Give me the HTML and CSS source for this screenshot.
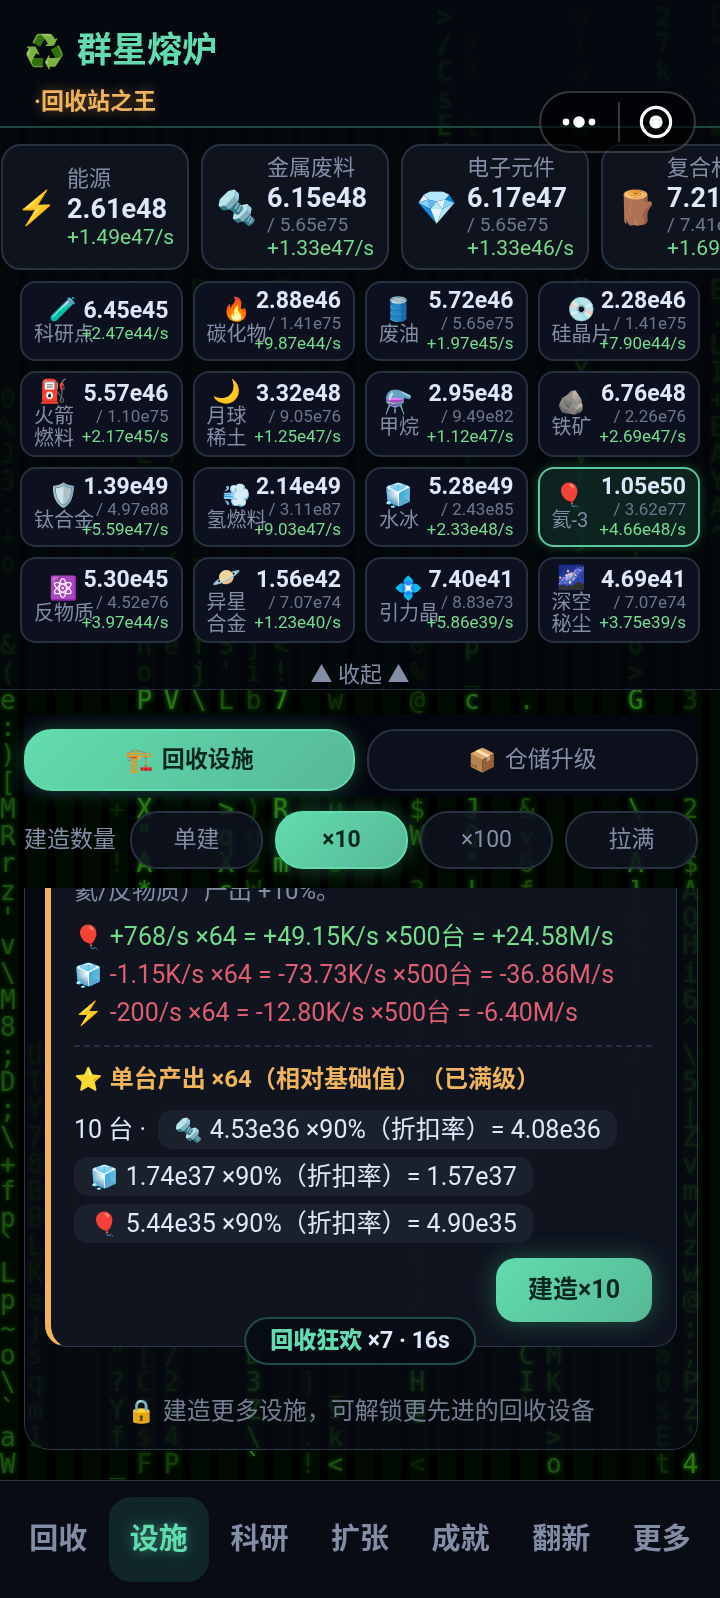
FILE: index.html
```html
<!DOCTYPE html>
<html lang="zh-CN">
<head>
<meta charset="utf-8">
<meta name="viewport" content="width=device-width, initial-scale=1">
<title>群星熔炉</title>
<link rel="stylesheet" href="styles.css">
</head>
<body>
<div class="rain" id="rain" aria-hidden="true"></div>

<div class="app">
  <header class="top">
    <h1 class="top-title"><span class="emoji">♻️</span>群星熔炉</h1>
    <p class="top-rank">·回收站之王</p>
  </header>

  <div class="capsule">
    <button class="capsule-btn" type="button" aria-label="更多操作">
      <svg width="36" height="16" viewBox="0 0 36 16"><circle cx="5" cy="8" r="3.4"/><circle cx="18" cy="8" r="5.8"/><circle cx="31" cy="8" r="3.4"/></svg>
    </button>
    <button class="capsule-btn capsule-close" type="button" aria-label="关闭">
      <svg width="34" height="34" viewBox="0 0 34 34"><circle cx="17" cy="17" r="14.6" fill="none" stroke="#fff" stroke-width="3.2"/><circle cx="17" cy="17" r="6.6"/></svg>
    </button>
  </div>

  <section class="resources" aria-label="资源">
    <div class="strip">
      <article class="main-res"><span class="emoji">⚡</span><div><h2>能源</h2><b>2.61e48</b><i class="rate">+1.49e47/s</i></div></article>
      <article class="main-res"><span class="emoji">🔩</span><div><h2>金属废料</h2><b>6.15e48</b><i class="cap">/ 5.65e75</i><i class="rate">+1.33e47/s</i></div></article>
      <article class="main-res"><span class="emoji">💎</span><div><h2>电子元件</h2><b>6.17e47</b><i class="cap">/ 5.65e75</i><i class="rate">+1.33e46/s</i></div></article>
      <article class="main-res"><span class="emoji">🪵</span><div><h2>复合材料</h2><b>7.21e47</b><i class="cap">/ 7.41e75</i><i class="rate">+1.69e46/s</i></div></article>
    </div>

    <div class="grid">
      <article class="res"><div class="res-name"><span class="emoji">🧪</span><span>科研点</span></div><div class="res-val"><b>6.45e45</b><i class="rate">+2.47e44/s</i></div></article>
      <article class="res"><div class="res-name"><span class="emoji">🔥</span><span>碳化物</span></div><div class="res-val"><b>2.88e46</b><i class="cap">/ 1.41e75</i><i class="rate">+9.87e44/s</i></div></article>
      <article class="res"><div class="res-name"><span class="emoji">🛢️</span><span>废油</span></div><div class="res-val"><b>5.72e46</b><i class="cap">/ 5.65e75</i><i class="rate">+1.97e45/s</i></div></article>
      <article class="res"><div class="res-name"><span class="emoji">💿</span><span>硅晶片</span></div><div class="res-val"><b>2.28e46</b><i class="cap">/ 1.41e75</i><i class="rate">+7.90e44/s</i></div></article>

      <article class="res"><div class="res-name"><span class="emoji">⛽</span><span>火箭<br>燃料</span></div><div class="res-val"><b>5.57e46</b><i class="cap">/ 1.10e75</i><i class="rate">+2.17e45/s</i></div></article>
      <article class="res"><div class="res-name"><span class="emoji">🌙</span><span>月球<br>稀土</span></div><div class="res-val"><b>3.32e48</b><i class="cap">/ 9.05e76</i><i class="rate">+1.25e47/s</i></div></article>
      <article class="res"><div class="res-name"><span class="emoji">⚗️</span><span>甲烷</span></div><div class="res-val"><b>2.95e48</b><i class="cap">/ 9.49e82</i><i class="rate">+1.12e47/s</i></div></article>
      <article class="res"><div class="res-name"><span class="emoji">🪨</span><span>铁矿</span></div><div class="res-val"><b>6.76e48</b><i class="cap">/ 2.26e76</i><i class="rate">+2.69e47/s</i></div></article>

      <article class="res"><div class="res-name"><span class="emoji">🛡️</span><span>钛合金</span></div><div class="res-val"><b>1.39e49</b><i class="cap">/ 4.97e88</i><i class="rate">+5.59e47/s</i></div></article>
      <article class="res"><div class="res-name"><span class="emoji">💨</span><span>氢燃料</span></div><div class="res-val"><b>2.14e49</b><i class="cap">/ 3.11e87</i><i class="rate">+9.03e47/s</i></div></article>
      <article class="res"><div class="res-name"><span class="emoji">🧊</span><span>水冰</span></div><div class="res-val"><b>5.28e49</b><i class="cap">/ 2.43e85</i><i class="rate">+2.33e48/s</i></div></article>
      <article class="res res-hot"><div class="res-name"><span class="emoji">🎈</span><span>氦-3</span></div><div class="res-val"><b>1.05e50</b><i class="cap">/ 3.62e77</i><i class="rate">+4.66e48/s</i></div></article>

      <article class="res"><div class="res-name"><span class="emoji">⚛️</span><span>反物质</span></div><div class="res-val"><b>5.30e45</b><i class="cap">/ 4.52e76</i><i class="rate">+3.97e44/s</i></div></article>
      <article class="res"><div class="res-name"><span class="emoji">🪐</span><span>异星<br>合金</span></div><div class="res-val"><b>1.56e42</b><i class="cap">/ 7.07e74</i><i class="rate">+1.23e40/s</i></div></article>
      <article class="res"><div class="res-name"><span class="emoji">💠</span><span>引力晶</span></div><div class="res-val"><b>7.40e41</b><i class="cap">/ 8.83e73</i><i class="rate">+5.86e39/s</i></div></article>
      <article class="res"><div class="res-name"><span class="emoji">🌌</span><span>深空<br>秘尘</span></div><div class="res-val"><b>4.69e41</b><i class="cap">/ 7.07e74</i><i class="rate">+3.75e39/s</i></div></article>
    </div>
    <button class="collapse" type="button">▲ 收起 ▲</button>
  </section>

  <main class="stage">
    <div class="tabs">
      <button class="pill pill-on" type="button"><span class="emoji">🏗️</span>回收设施</button>
      <button class="pill" type="button"><span class="emoji">📦</span>仓储升级</button>
    </div>
    <div class="amount">
      <span class="amount-label">建造数量</span>
      <button class="pill" type="button">单建</button>
      <button class="pill pill-on" type="button">×10</button>
      <button class="pill" type="button">×100</button>
      <button class="pill" type="button">拉满</button>
    </div>

    <div class="viewport">
      <section class="panel">
        <article class="facility">
          <p class="desc">氦/反物质）产出 +10%。</p>
          <ul class="flows">
            <li class="gain"><span class="emoji">🎈</span>+768/s ×64 = +49.15K/s ×500台 = +24.58M/s</li>
            <li class="loss"><span class="emoji">🧊</span>-1.15K/s ×64 = -73.73K/s ×500台 = -36.86M/s</li>
            <li class="loss"><span class="emoji">⚡</span>-200/s ×64 = -12.80K/s ×500台 = -6.40M/s</li>
          </ul>
          <p class="star"><span class="emoji">⭐</span>单台产出 ×64（相对基础值）（已满级）</p>
          <div class="costs">
            <span>10 台 ·</span>
            <span class="chip"><span class="emoji">🔩</span>4.53e36 ×90%（折扣率）= 4.08e36</span>
            <span class="chip"><span class="emoji">🧊</span>1.74e37 ×90%（折扣率）= 1.57e37</span>
            <span class="chip"><span class="emoji">🎈</span>5.44e35 ×90%（折扣率）= 4.90e35</span>
          </div>
          <button class="build" type="button">建造×10</button>
        </article>
        <p class="locked"><span class="emoji">🔒</span>建造更多设施，可解锁更先进的回收设备</p>
      </section>
    </div>
  </main>

  <nav class="nav">
    <a href="#recycle">回收</a>
    <a href="#facility" class="nav-on" aria-current="page">设施</a>
    <a href="#research">科研</a>
    <a href="#expand">扩张</a>
    <a href="#achievement">成就</a>
    <a href="#renew">翻新</a>
    <a href="#more">更多</a>
  </nav>
</div>

<div class="toast" role="status"><strong>回收狂欢</strong> ×7 · 16s</div>
<script src="rain.js"></script>
</body>
</html>
```
FILE: styles.css
```css
:root {
  --mint: #62dcae;
  --mint-deep: #56b896;
  --muted: #838da6;
  --text: #dfe8fa;
  --green: #74dc8c;
  --red: #df5f72;
  --gold: #f0b45c;
  --line: #26323f;
}

* { box-sizing: border-box; }

body {
  margin: 0;
  background: #000;
  color: var(--text);
  font-family: Roboto, "Noto Sans CJK SC", "Noto Color Emoji", sans-serif;
  font-size: 24px;
  text-spacing-trim: space-all;
}

h1, h2, p, ul { margin: 0; padding: 0; }
ul { list-style: none; }
i { font-style: normal; }
button { font: inherit; color: inherit; border: 0; background: none; padding: 0; cursor: pointer; }
.emoji { font-family: "Noto Color Emoji", sans-serif; font-size: 23px; font-weight: 400; line-height: 1; }

/* falling characters */
.rain {
  position: fixed;
  inset: 4px -17px -17px 0;
  z-index: 0;
  display: grid;
  grid-template-columns: repeat(27, minmax(0, 1fr));
  grid-template-rows: repeat(59, minmax(0, 1fr));
  font: 26px/27px "DejaVu Sans Mono", monospace;
  color: #2d8414;
  text-shadow: 0 0 4px #2d8414;
}
.rain-band { grid-row: 1 / -1; margin-right: 8px; background: #010a01; }

.app { position: relative; z-index: 1; min-height: 100vh; display: flex; flex-direction: column; }

.top {
  padding: 25px 24px 0;
  height: 128px;
  border-bottom: 2px solid #1c473f;
  background: rgba(5, 9, 17, .88);
}
.top-title {
  display: flex;
  align-items: center;
  gap: 12px;
  font-size: 35px;
  line-height: 52px;
  font-weight: 700;
  color: var(--mint);
}
.top-title .emoji { font-size: 33px; }
.top-rank {
  padding-left: 10px;
  font-size: 23px;
  line-height: 50px;
  font-weight: 700;
  color: var(--gold);
  text-shadow: 0 0 12px rgba(240, 160, 60, .5);
}

.capsule {
  position: absolute;
  top: 91px;
  right: 24px;
  z-index: 2;
  display: flex;
  width: 157px;
  height: 62px;
  border: 2px solid rgba(255, 255, 255, .2);
  border-radius: 31px;
  background: rgba(0, 0, 0, .6);
}
.capsule-btn { flex: 1; display: grid; place-items: center; position: relative; }
.capsule-btn svg { fill: #fff; }
.capsule-close::before {
  content: "";
  position: absolute;
  left: 0;
  top: 9px;
  bottom: 9px;
  width: 2px;
  background: rgba(255, 255, 255, .2);
}

.resources {
  border-bottom: 1px solid #1e2a3a;
  background: rgba(4, 7, 14, .7);
}
.strip { display: flex; gap: 12px; padding: 16px 0 0 1px; overflow: hidden; }
.main-res {
  flex: 0 0 188px;
  min-height: 125px;
  display: flex;
  align-items: center;
  gap: 10px;
  padding: 8px 0 8px 13px;
  border: 2px solid var(--line);
  border-radius: 20px;
  background: rgba(15, 20, 32, .93);
  white-space: nowrap;
}
.main-res .emoji { font-size: 33px; }
.main-res h2 { font-size: 22px; line-height: 28px; font-weight: 400; color: var(--muted); }
.main-res b { display: block; font-size: 27px; line-height: 32px; font-weight: 700; }
.main-res i { display: block; }
.main-res .cap { font-size: 19px; line-height: 22px; }
.main-res .rate { font-size: 21px; line-height: 24px; }
.cap { color: #6d778c; }
.rate { color: var(--green); }

.grid { display: grid; grid-template-columns: repeat(4, minmax(0, 1fr)); gap: 10px; padding: 11px 20px 0; }
.res {
  display: grid;
  align-items: center;
  min-height: 80px;
  padding: 6px 12px;
  border: 2px solid var(--line);
  border-radius: 16px;
  background: rgba(14, 18, 34, .88);
  white-space: nowrap;
}
.res-hot {
  border-color: #5cc79f;
  background: rgba(16, 44, 38, .78);
  box-shadow: 0 0 12px rgba(40, 170, 100, .4);
}
.res-name, .res-val { grid-area: 1 / 1; display: flex; flex-direction: column; }
.res-name { justify-self: start; align-items: center; font-size: 20px; line-height: 22px; color: var(--muted); }
.res-name .emoji { line-height: 26px; }
.res-val { justify-self: end; align-items: flex-end; }
.res-val b { font-size: 23px; line-height: 24px; font-weight: 700; }
.res-val .cap, .res-val .rate { font-size: 17px; line-height: 20px; }
.collapse { display: block; width: 100%; padding-top: 18px; font-size: 22px; line-height: 28px; color: var(--muted); }

.stage { flex: 1; padding: 24px 22px 30px 24px; }
.tabs { display: flex; gap: 12px; padding: 15px 0 6px; background: #04060d; }
.pill {
  flex: 1 1 0;
  min-height: 58px;
  display: flex;
  align-items: center;
  justify-content: center;
  gap: 8px;
  border: 2px solid var(--line);
  border-radius: 28px;
  background: rgba(14, 19, 32, .84);
  font-size: 23px;
  line-height: 28px;
  color: var(--muted);
}
.tabs .pill { min-height: 62px; }
.pill-on, .tabs .pill-on {
  border-color: var(--mint);
  background: linear-gradient(135deg, var(--mint), var(--mint-deep));
  box-shadow: 0 0 20px rgba(70, 200, 150, .35);
  color: #08281d;
  font-weight: 700;
}
.amount { display: flex; align-items: center; gap: 12px; padding: 14px 0 19px; }
.amount-label { padding-right: 2px; font-size: 23px; line-height: 28px; color: var(--muted); white-space: nowrap; }

.viewport { overflow: hidden; }
.panel {
  margin-top: -60px;
  padding: 20px;
  border: 1px solid #2b3a49;
  border-radius: 26px;
  background: rgba(8, 12, 21, .7);
}
.facility {
  padding: 24px 24px 24px 23px;
  border: 1px solid #2b3a49;
  border-left: 6px solid var(--gold);
  border-radius: 22px;
  background: rgba(16, 22, 33, .92);
}
.desc { margin-bottom: 10px; line-height: 34px; color: var(--muted); }
.flows { padding-bottom: 13px; border-bottom: 2px dashed #252e3b; font-size: 25px; line-height: 38px; }
.flows .emoji, .star .emoji, .chip .emoji, .locked .emoji { margin-right: 7px; }
.gain { color: var(--green); }
.loss { color: var(--red); }
.star { padding-top: 13px; line-height: 38px; font-weight: 700; color: var(--gold); }
.costs { display: flex; flex-wrap: wrap; align-items: center; gap: 8px 12px; margin-top: 12px; font-size: 25px; line-height: 39px; }
.chip { padding: 0 16px; border-radius: 14px; background: #1a212d; white-space: nowrap; }
.build {
  display: block;
  margin: 15px 0 0 auto;
  padding: 0 32px;
  border-radius: 20px;
  background: linear-gradient(135deg, var(--mint), var(--mint-deep));
  box-shadow: 0 0 24px rgba(70, 200, 150, .35);
  font-size: 25px;
  line-height: 64px;
  font-weight: 700;
  color: #08281d;
}
.locked { margin-top: 46px; line-height: 36px; text-align: center; color: #767f92; }

.toast {
  position: fixed;
  left: 50%;
  bottom: 233px;
  z-index: 3;
  transform: translateX(-50%);
  padding: 0 24px;
  border: 2px solid #214a49;
  border-radius: 24px;
  background: rgba(7, 11, 20, .94);
  font-size: 23px;
  line-height: 44px;
  font-weight: 700;
  white-space: nowrap;
}
.toast strong { color: var(--mint); }

.nav {
  display: flex;
  padding: 16px 8px;
  border-top: 1px solid #2a3441;
  background: rgba(9, 12, 22, .97);
}
.nav a {
  flex: 1;
  border-radius: 22px;
  font-size: 29px;
  line-height: 85px;
  font-weight: 700;
  text-align: center;
  text-decoration: none;
  color: var(--muted);
}
.nav .nav-on {
  background: #10262b;
  color: var(--mint);
  text-shadow: 0 0 12px rgba(98, 220, 174, .5);
}
```
FILE: rain.js
```js
// column, first row, characters from top to bottom, strength
const streams = [
  [0, 14, "0%J3-+o", 0.3],
  [0, 23, "&(e:)[MRrz'v\\M8;D;\\+fp`Lp~o\\`aW", 0.6],
  [1, 38, "UTY78BBLKajsqm1", 0.3],
  [4, 29, "+ !", 0.2],
  [4, 46, "zl?\"?Yf_", 0.5],
  [5, 16, "L Lyc nho", 0.5],
  [5, 25, "P", 0.9],
  [5, 29, "X\"A*", 0.9],
  [5, 49, "[CF$F", 0.35],
  [6, 16, "Tva.{nfe", 0.4],
  [6, 25, "V", 0.9],
  [6, 49, "/2x4P", 0.45],
  [7, 10, "RK{", 0.3],
  [7, 19, "h>e*", 0.35],
  [7, 23, "fj\\", 0.7],
  [8, 21, ",FS'L", 0.6],
  [8, 29, ">qXs", 0.8],
  [8, 36, "N)/:[", 0.5],
  [9, 23, "jib", 0.4],
  [9, 29, ")g2W", 0.35],
  [9, 36, "[| BU[X@R.Z", 0.35],
  [9, 49, "D3Z\\`", 0.9],
  [10, 10, "8 U", 0.4],
  [10, 19, "!u;*<!", 0.6],
  [10, 25, "7", 0.9],
  [10, 29, "R", 0.9],
  [10, 31, "m", 0.9],
  [11, 50, "],.!", 0.3],
  [12, 25, "w", 0.3],
  [12, 29, "u o", 0.3],
  [12, 50, "_9k<", 0.6],
  [15, 23, "0%@", 0.35],
  [15, 29, "$W", 0.6],
  [15, 32, "3m", 0.4],
  [15, 36, "GD*Ow 3e8XT/", 0.7],
  [15, 50, "H@", 0.9],
  [15, 53, "<", 0.2],
  [16, 0, ">/CsEG|", 0.9],
  [17, 1, "?K t o", 0.3],
  [17, 10, "Q", 0.4],
  [17, 15, "xPx$", 0.3],
  [17, 23, "p_c", 0.8],
  [17, 29, "JQ\"!<", 0.7],
  [17, 36, "C9", 0.8],
  [19, 25, ".", 0.7],
  [19, 29, "&v6fO", 0.5],
  [19, 36, "AL", 0.5],
  [19, 42, "3&", 0.6],
  [19, 48, "mCI`", 0.9],
  [20, 49, "MK->o", 0.6],
  [21, 0, "w(a", 0.3],
  [21, 4, "8", 0.5],
  [21, 7, "D", 0.3],
  [21, 10, "H3EX9yvt<j", 0.7],
  [23, 10, "Y", 0.3],
  [23, 19, "5|'7o>", 0.5],
  [23, 25, "G", 0.9],
  [23, 29, "\\ A]@%7", 0.8],
  [23, 37, "_o;7", 0.8],
  [24, 0, "27k", 0.7],
  [24, 49, "a0sEt", 0.3],
  [25, 25, "3", 0.3],
  [25, 29, "2'$AQHi6^\\5|Zvmvzw@:;PZ'", 0.6],
  [25, 53, "4", 0.9],
  [26, 0, "E*g-w", 0.4],
  [26, 10, "E.LI+EAYA^", 0.5]
];

const rain = document.getElementById("rain");

for (let column = 1; column <= 27; column += 1) {
  const band = document.createElement("span");
  band.className = "rain-band";
  band.style.gridColumn = column;
  rain.append(band);
}

for (const [column, row, chars, strength] of streams) {
  [...chars].forEach((char, i) => {
    if (char === " ") return;
    const cell = document.createElement("span");
    cell.textContent = char;
    cell.style.gridArea = `${row + i + 1} / ${column + 1}`;
    cell.style.opacity = strength;
    rain.append(cell);
  });
}
```
